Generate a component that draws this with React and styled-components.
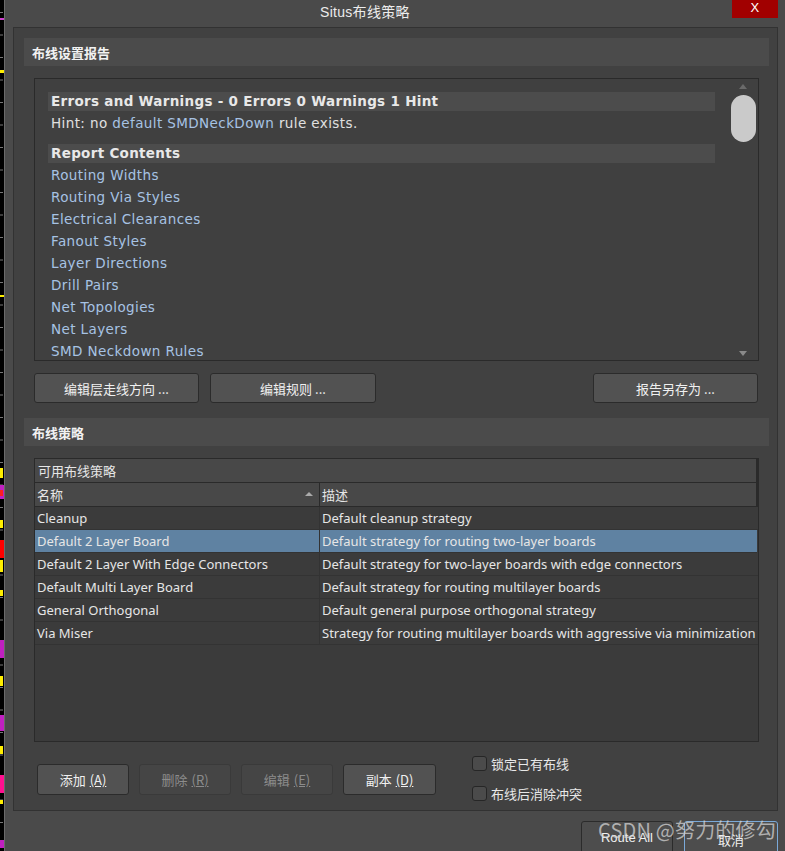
import React from "react";
import styled, { createGlobalStyle, css } from "styled-components";

const Global = createGlobalStyle`
  html, body { margin: 0; padding: 0; background: #4a4a4a; }
  body { width: 785px; height: 851px; overflow: hidden; font-family: "DejaVu Sans", "Noto Sans CJK SC", sans-serif; }
  * { box-sizing: border-box; }
`;

const Screen = styled.div`
  display: flex;
  width: 785px;
  height: 851px;
  position: relative;
  overflow: hidden;
`;

const PcbStrip = styled.div`
  width: 5px;
  flex: none;
  background: #000;
  border-right: 1px solid #6a6a6a;
`;

const Dialog = styled.div`
  flex: 1;
  display: flex;
  flex-direction: column;
  background: #4a4a4a;
`;

const TitleBar = styled.div`
  height: 27px;
  flex: none;
  display: flex;
  align-items: flex-start;
  position: relative;
  color: #ececec;
  font-family: "Liberation Sans", "Noto Sans CJK SC", sans-serif;
  font-size: 14px;
  letter-spacing: 0.3px;
  padding: 1px 0 0 315px;
`;

const CloseBtn = styled.div`
  position: absolute;
  right: 7px;
  top: 0;
  width: 46px;
  height: 18px;
  background: #a10000;
  color: #fff;
  font-family: "Liberation Sans", sans-serif;
  font-size: 13px;
  display: flex;
  justify-content: center;
  align-items: flex-start;
`;

const Panel = styled.div`
  margin: 0 7px 0 8px;
  height: 784px;
  flex: none;
  background: #414141;
  border: 1px solid #323232;
  padding: 10px 8px 0 10px;
  display: flex;
  flex-direction: column;
`;

const SectionHeader = styled.div`
  height: 28px;
  background: #4b4b4b;
  color: #f2f2f2;
  font-weight: bold;
  font-size: 13px;
  font-family: "Noto Sans CJK SC", sans-serif;
  display: flex;
  align-items: center;
  padding-left: 8px;
`;

const SectionBody = styled.div`
  padding: 12px 10px 0 10px;
  display: flex;
  flex-direction: column;
`;

const SectionGap = styled.div`
  height: 15px;
`;

const ReportBox = styled.div`
  height: 283px;
  border: 1px solid #2a2a2a;
  background: #404040;
  display: flex;
  position: relative;
  overflow: hidden;
`;

const ReportContent = styled.div`
  flex: 1;
  padding: 13px 0 0 13px;
  font-size: 13.5px;
  letter-spacing: 0.4px;
  font-family: "DejaVu Sans", sans-serif;
  display: flex;
  flex-direction: column;
`;

const ReportHeading = styled.div`
  width: 667px;
  height: 19px;
  background: #4c4c4c;
  color: #e8e8e8;
  font-weight: bold;
  letter-spacing: 0.3px;
  padding-left: 3px;
  line-height: 19px;
  margin-top: ${(p) => p.$mt || 0}px;
`;

const ReportLine = styled.div`
  height: 22px;
  line-height: 24px;
  padding-left: 3px;
  color: ${(p) => (p.$link ? "#a7c3e4" : "#e0e0e0")};
  white-space: nowrap;
`;

const Link = styled.span`
  color: #a7c3e4;
`;

const ScrollTrack = styled.div`
  width: 30px;
  flex: none;
  display: flex;
  flex-direction: column;
  align-items: center;
  padding: 5px 0 4px;
  justify-content: space-between;
`;

const ScrollThumb = styled.div`
  width: 25px;
  height: 47px;
  border-radius: 13px;
  background: #cacaca;
  margin-top: 6px;
`;

const Arrow = styled.div`
  width: 0;
  height: 0;
  border-left: 4px solid transparent;
  border-right: 4px solid transparent;
  ${(p) =>
    p.$down
      ? css`border-top: 5px solid #8a8a8a;`
      : css`border-bottom: 5px solid #6a6a6a;`}
`;

const ScrollTop = styled.div`
  display: flex;
  flex-direction: column;
  align-items: center;
`;

const ButtonRow = styled.div`
  display: flex;
  gap: 11px;
  margin-top: 12px;
`;

const Button = styled.button`
  height: ${(p) => p.$h || 30}px;
  width: ${(p) => p.$w}px;
  background: ${(p) => (p.disabled ? "#454545" : "#525252")};
  border: 1px solid ${(p) => (p.disabled ? "#3a3a3a" : "#2b2b2b")};
  border-radius: 3px;
  color: ${(p) => (p.disabled ? "#8c8c8c" : "#f0f0f0")};
  font-family: "Noto Sans CJK SC", sans-serif;
  font-size: 13px;
  padding: 0;
  margin-left: ${(p) => p.$ml || 0}px;
  display: flex;
  align-items: center;
  justify-content: center;
  cursor: default;
`;

const Ul = styled.span`
  text-decoration: underline;
  margin-left: 4px;
`;

const Table = styled.div`
  height: 284px;
  border: 1px solid #2a2a2a;
  background: #3b3b3b;
  font-family: "Noto Sans", "Noto Sans CJK SC", sans-serif;
  font-size: 13px;
  color: #e6e6e6;
`;

const GroupHeader = styled.div`
  height: 24px;
  background: #484848;
  border-bottom: 1px solid #2a2a2a;
  border-right: 2px solid #2a2a2a;
  display: flex;
  align-items: center;
  padding-left: 3px;
  font-family: "Noto Sans CJK SC", sans-serif;
`;

const Row = styled.div`
  display: grid;
  grid-template-columns: 285px 1fr;
  height: 23px;
  background: ${(p) => (p.$selected ? "#5f82a2" : p.$head ? "#484848" : "#3b3b3b")};
  border-bottom: 1px solid #333;
  ${(p) => p.$head && css`border-bottom: 1px solid #2a2a2a; border-right: 2px solid #2a2a2a; height: 24px;`}
  ${(p) => p.$selected && css`margin-right: 1px;`}
`;

const Cell = styled.div`
  display: flex;
  align-items: center;
  padding-left: 2px;
  white-space: nowrap;
  overflow: hidden;
  position: relative;
  ${(p) => p.$first && css`border-right: 1px solid ${p.$head ? "#2a2a2a" : "#333"};`}
  ${(p) => p.$head && css`font-family: "Noto Sans CJK SC", sans-serif;`}
`;

const SortArrow = styled.div`
  position: absolute;
  right: 6px;
  top: 9px;
  width: 0;
  height: 0;
  border-left: 4px solid transparent;
  border-right: 4px solid transparent;
  border-bottom: 4px solid #aaa;
`;

const BottomRow = styled.div`
  display: flex;
  margin-top: 14px;
  padding-left: 3px;
`;

const ButtonGroup = styled.div`
  display: flex;
  gap: 10px;
  margin-top: 8px;
`;

const Checks = styled.div`
  display: flex;
  flex-direction: column;
  gap: 15px;
  margin-left: 36px;
`;

const CheckLine = styled.label`
  display: flex;
  align-items: center;
  gap: 4px;
  color: #e8e8e8;
  font-family: "Noto Sans CJK SC", sans-serif;
  font-size: 13px;
  height: 15px;
`;

const Box = styled.span`
  width: 15px;
  height: 15px;
  border-radius: 3px;
  background: #4b4b4b;
  border: 1px solid #262626;
`;

const Footer = styled.div`
  display: flex;
  justify-content: flex-end;
  gap: 11px;
  padding: 10px 7px 0 0;
`;

const FooterButton = styled.div`
  width: ${(p) => p.$w}px;
  height: 34px;
  border-radius: 3px;
  background: #4d4d4d;
  border: 1px solid ${(p) => (p.$focus ? "#7aa9d9" : "#2b2b2b")};
  color: #f0f0f0;
  font-family: "Liberation Sans", "Noto Sans CJK SC", sans-serif;
  font-size: 13px;
  display: flex;
  justify-content: center;
  padding-top: 8px;
`;

const Watermark = styled.div`
  position: absolute;
  left: 598px;
  top: 815px;
  font-family: "Noto Sans CJK SC", sans-serif;
  font-size: 20px;
  color: rgba(215, 215, 215, 0.72);
  white-space: nowrap;
  letter-spacing: 0.2px;
`;

const PcbMarks = () => (
  <svg width="5" height="851" style={{ display: "block" }}>
    {Array.from({ length: 38 }).map((_, i) => (
      <rect key={i} x="0" y={12 + i * 22.5} width="3" height="1" fill="#777" />
    ))}
    <rect x="0" y="70" width="4" height="3" fill="#ffee00" />
    <rect x="0" y="18" width="4" height="2" fill="#d040d0" />
    <rect x="0" y="295" width="4" height="2" fill="#ffee00" />
    <rect x="0" y="468" width="3" height="10" fill="#ffee00" />
    <rect x="0" y="485" width="4" height="14" fill="#c020c0" />
    <rect x="0" y="490" width="3" height="6" fill="#ff2020" />
    <rect x="0" y="520" width="3" height="8" fill="#ffee00" />
    <rect x="0" y="540" width="4" height="18" fill="#ff0000" />
    <rect x="0" y="560" width="3" height="12" fill="#ffee00" />
    <rect x="0" y="590" width="3" height="6" fill="#ffee00" />
    <rect x="0" y="640" width="4" height="18" fill="#c020c0" />
    <rect x="0" y="676" width="3" height="10" fill="#ffee00" />
    <rect x="0" y="715" width="4" height="16" fill="#c020c0" />
    <rect x="0" y="746" width="3" height="8" fill="#ffee00" />
    <rect x="0" y="775" width="4" height="18" fill="#ff1090" />
    <rect x="0" y="800" width="3" height="4" fill="#ffee00" />
    <rect x="0" y="840" width="4" height="8" fill="#c020c0" />
  </svg>
);

const reportItems = [
  "Routing Widths",
  "Routing Via Styles",
  "Electrical Clearances",
  "Fanout Styles",
  "Layer Directions",
  "Drill Pairs",
  "Net Topologies",
  "Net Layers",
  "SMD Neckdown Rules",
];

const strategies = [
  ["Cleanup", "Default cleanup strategy"],
  ["Default 2 Layer Board", "Default strategy for routing two-layer boards"],
  ["Default 2 Layer With Edge Connectors", "Default strategy for two-layer boards with edge connectors"],
  ["Default Multi Layer Board", "Default strategy for routing multilayer boards"],
  ["General Orthogonal", "Default general purpose orthogonal strategy"],
  ["Via Miser", "Strategy for routing multilayer boards with aggressive via minimization"],
];

export default function App() {
  return (
    <Screen>
      <Global />
      <PcbStrip>
        <PcbMarks />
      </PcbStrip>
      <Dialog>
        <TitleBar>
          Situs布线策略
          <CloseBtn>X</CloseBtn>
        </TitleBar>
        <Panel>
          <SectionHeader>布线设置报告</SectionHeader>
          <SectionBody>
            <ReportBox>
              <ReportContent>
                <ReportHeading>Errors and Warnings - 0 Errors 0 Warnings 1 Hint</ReportHeading>
                <ReportLine>
                  Hint: no <Link>default SMDNeckDown</Link> rule exists.
                </ReportLine>
                <ReportHeading $mt={11}>Report Contents</ReportHeading>
                {reportItems.map((t) => (
                  <ReportLine key={t} $link>
                    {t}
                  </ReportLine>
                ))}
              </ReportContent>
              <ScrollTrack>
                <ScrollTop>
                  <Arrow />
                  <ScrollThumb />
                </ScrollTop>
                <Arrow $down />
              </ScrollTrack>
            </ReportBox>
            <ButtonRow>
              <Button $w={165}>编辑层走线方向 ...</Button>
              <Button $w={166}>编辑规则 ...</Button>
              <Button $w={165} $ml={206}>报告另存为 ...</Button>
            </ButtonRow>
          </SectionBody>
          <SectionGap />
          <SectionHeader>布线策略</SectionHeader>
          <SectionBody>
            <Table>
              <GroupHeader>可用布线策略</GroupHeader>
              <Row $head>
                <Cell $first $head>
                  名称
                  <SortArrow />
                </Cell>
                <Cell $head>描述</Cell>
              </Row>
              {strategies.map(([n, d]) => (
                <Row key={n} $selected={n === "Default 2 Layer Board"}>
                  <Cell $first>{n}</Cell>
                  <Cell>{d}</Cell>
                </Row>
              ))}
            </Table>
            <BottomRow>
              <ButtonGroup>
                <Button $w={92} $h={31}>
                  添加<Ul>(A)</Ul>
                </Button>
                <Button $w={92} $h={31} disabled>
                  删除<Ul>(R)</Ul>
                </Button>
                <Button $w={92} $h={31} disabled>
                  编辑<Ul>(E)</Ul>
                </Button>
                <Button $w={93} $h={31}>
                  副本<Ul>(D)</Ul>
                </Button>
              </ButtonGroup>
              <Checks>
                <CheckLine>
                  <Box />
                  锁定已有布线
                </CheckLine>
                <CheckLine>
                  <Box />
                  布线后消除冲突
                </CheckLine>
              </Checks>
            </BottomRow>
          </SectionBody>
        </Panel>
        <Footer>
          <FooterButton $w={92}>Route All</FooterButton>
          <FooterButton $w={94} $focus>取消</FooterButton>
        </Footer>
      </Dialog>
      <Watermark>CSDN @努力的修勾</Watermark>
    </Screen>
  );
}
